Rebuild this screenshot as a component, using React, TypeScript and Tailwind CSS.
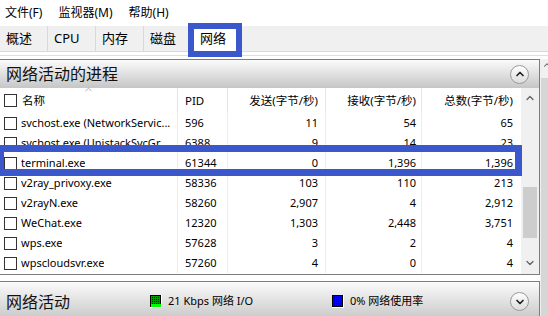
import { ChevronUp, ChevronDown } from "lucide-react";

type Proc = { name: string; pid: string; send: string; recv: string; total: string };

const procs: Proc[] = [
  { name: "svchost.exe (NetworkServic...", pid: "596", send: "11", recv: "54", total: "65" },
  { name: "svchost.exe (UnistackSvcGr...", pid: "6388", send: "9", recv: "14", total: "23" },
  { name: "terminal.exe", pid: "61344", send: "0", recv: "1,396", total: "1,396" },
  { name: "v2ray_privoxy.exe", pid: "58336", send: "103", recv: "110", total: "213" },
  { name: "v2rayN.exe", pid: "58260", send: "2,907", recv: "4", total: "2,912" },
  { name: "WeChat.exe", pid: "12320", send: "1,303", recv: "2,448", total: "3,751" },
  { name: "wps.exe", pid: "57628", send: "3", recv: "2", total: "4" },
  { name: "wpscloudsvr.exe", pid: "57260", send: "4", recv: "0", total: "4" },
];

const tabs = ["概述", "CPU", "内存", "磁盘", "网络"];

function CircleButton({ down }: { down?: boolean }) {
  return (
    <div className="flex h-[19px] w-[19px] items-center justify-center rounded-full border border-[#9a9a9a] bg-gradient-to-b from-white to-[#dcdcdc]">
      {down ? (
        <ChevronDown className="h-[12px] w-[12px] text-[#222]" strokeWidth={3.5} />
      ) : (
        <ChevronUp className="h-[12px] w-[12px] text-[#222]" strokeWidth={3.5} />
      )}
    </div>
  );
}

function Legend({ color, id }: { color: string; id: string }) {
  return (
    <svg width="12" height="13" viewBox="0 0 12 13" className="shrink-0">
      <defs>
        <pattern id={id} width="2" height="2" patternUnits="userSpaceOnUse">
          <rect width="2" height="2" fill={color} />
          <rect width="1" height="1" fill="#000" />
        </pattern>
      </defs>
      <rect x="0" y="0" width="12" height="13" fill="#fff" />
      <rect x="0" y="0" width="11" height="12" fill="#000" />
      <rect x="1" y="1" width="9" height="10" fill={`url(#${id})`} />
      {id === "g" && <rect x="1" y="9" width="10" height="3" fill="#00ff00" />}
    </svg>
  );
}

function Checkbox() {
  return <div className="h-[13px] w-[13px] shrink-0 border border-[#333] bg-white" />;
}

function SectionHeader({ title, children, down }: { title: string; children?: React.ReactNode; down?: boolean }) {
  return (
    <div className="flex h-full items-center border-t border-r border-[#7d7d7d] bg-gradient-to-b from-[#fbfbfb] to-[#c6c6c6] pr-[10px] pl-[6px]">
      <span className="text-[16px] text-[#111]">{title}</span>
      <div className="flex flex-1 items-center">{children}</div>
      <CircleButton down={down} />
    </div>
  );
}

export default function App() {
  return (
    <div
      className="relative h-[316px] w-[548px] overflow-hidden bg-white text-black"
      style={{ fontFamily: '"Noto Sans", "Noto Sans CJK SC", sans-serif' }}
    >
      {/* menu */}
      <div className="flex h-[26px] items-center gap-[16px] pl-[5px] text-[12px]">
        <span>文件(F)</span>
        <span>监视器(M)</span>
        <span>帮助(H)</span>
      </div>

      {/* tabs */}
      <div className="flex h-[26px] border-b border-[#d9d9d9] bg-[#f0f0f0] text-[13px]">
        {tabs.map((t, i) => (
          <div
            key={t}
            className={
              i === 4
                ? "flex w-[46px] items-center bg-white pl-[8px]"
                : "flex w-[48px] items-center border-r border-[#d9d9d9] pl-[6px]"
            }
          >
            {t}
          </div>
        ))}
      </div>

      <div className="h-[3px]" />
      <div className="mb-[3px] h-px bg-[#dedede]" />

      <div className="flex">
        <div className="w-[540px]">
          <div className="h-[29px]">
            <SectionHeader title="网络活动的进程" />
          </div>

          {/* table */}
          <div className="flex h-[187px] border-r border-b border-[#7d7d7d] text-[11px]">
            <div className="w-[521px]">
              <div className="relative grid h-[25px] grid-cols-[178px_50px_98px_96px_99px] items-center text-[11.5px]">
                <div className="flex h-full items-center gap-[5px] border-r border-[#e5e5e5] pl-[4px]">
                  <Checkbox />
                  <span>名称</span>
                </div>
                <div className="flex h-full items-center border-r border-[#e5e5e5] pl-[7px]">PID</div>
                <div className="flex h-full items-center justify-end border-r border-[#e5e5e5] pr-[7px]">发送(字节/秒)</div>
                <div className="flex h-full items-center justify-end border-r border-[#e5e5e5] pr-[5px]">接收(字节/秒)</div>
                <div className="flex h-full items-center justify-end pr-[8px]">总数(字节/秒)</div>
                <ChevronUp className="absolute top-[-4px] left-[83px] h-[11px] w-[11px] text-[#888]" strokeWidth={1.5} />
              </div>
              {procs.map((p) => (
                <div key={p.pid} className="grid h-[20px] grid-cols-[178px_50px_98px_96px_99px] items-center">
                  <div className="flex h-full min-w-0 items-center gap-[4px] border-r border-[#e6eef8] pr-[4px] pl-[4px]">
                    <Checkbox />
                    <span className="min-w-0 truncate">{p.name}</span>
                  </div>
                  <div className="flex h-full items-center border-r border-[#e6eef8] pl-[7px]">{p.pid}</div>
                  <div className="flex h-full items-center justify-end border-r border-[#e6eef8] pr-[7px]">{p.send}</div>
                  <div className="flex h-full items-center justify-end border-r border-[#e6eef8] pr-[5px]">{p.recv}</div>
                  <div className="flex h-full items-center justify-end pr-[8px]">{p.total}</div>
                </div>
              ))}
            </div>

            {/* inner scrollbar */}
            <div className="flex w-[18px] flex-col items-center bg-[#f0f0f0]">
              <ChevronUp className="mt-[4px] h-[12px] w-[12px] text-[#606060]" strokeWidth={2.5} />
              <div className="mt-[83px] h-[51px] w-[14px] bg-[#cdcdcd]" />
              <div className="flex-1" />
              <ChevronDown className="mb-[5px] h-[12px] w-[12px] text-[#606060]" strokeWidth={2.5} />
            </div>
          </div>

          <div className="h-[6px]" />

          <div className="h-[40px]">
            <SectionHeader title="网络活动" down>
              <div className="ml-[80px] flex w-[182px] items-center gap-[6px] text-[11px]">
                <Legend color="#00a000" id="g" />
                <span>21 Kbps 网络 I/O</span>
              </div>
              <div className="flex items-center gap-[6px] text-[11px]">
                <Legend color="#0000ff" id="b" />
                <span>0% 网络使用率</span>
              </div>
            </SectionHeader>
          </div>
        </div>

        {/* outer scrollbar strip */}
        <div className="flex w-[8px] flex-col bg-[#f0f0f0]">
          <ChevronUp className="mt-[1px] ml-[2px] h-[10px] w-[10px] text-[#606060]" strokeWidth={2.5} />
          <div className="mt-[8px] ml-[1px] flex-1 bg-[#d6d6d6]" />
        </div>
      </div>

      {/* annotation boxes */}
      <div className="absolute top-[23px] left-[188px] h-[34px] w-[54px] border-[6px] border-[#3a57cc]" />
      <div className="absolute top-[145px] left-[-3px] h-[31px] w-[525px] border-[7px] border-[#3a57cc]" />
    </div>
  );
}
